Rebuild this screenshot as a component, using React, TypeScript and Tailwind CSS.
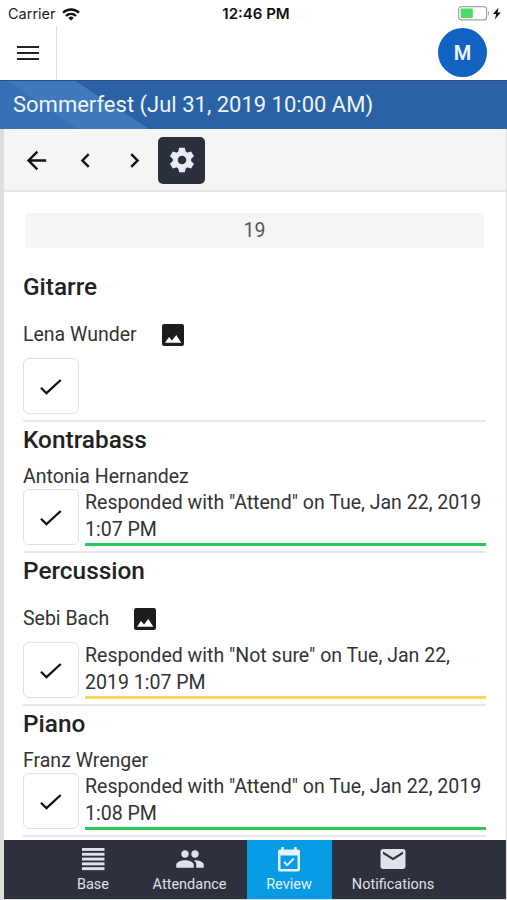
import { clsx } from "clsx";
import { MdArrowBack, MdChevronLeft, MdChevronRight, MdEmail, MdPeople } from "react-icons/md";

type Answer = { text: string; status: "attend" | "unsure" };
type Group = { instrument: string; member: string; photo?: boolean; answer?: Answer };

const GROUPS: Group[] = [
  { instrument: "Gitarre", member: "Lena Wunder", photo: true },
  { instrument: "Kontrabass", member: "Antonia Hernandez", answer: { text: 'Responded with "Attend" on Tue, Jan 22, 2019 1:07 PM', status: "attend" } },
  { instrument: "Percussion", member: "Sebi Bach", photo: true, answer: { text: 'Responded with "Not sure" on Tue, Jan 22, 2019 1:07 PM', status: "unsure" } },
  { instrument: "Piano", member: "Franz Wrenger", answer: { text: 'Responded with "Attend" on Tue, Jan 22, 2019 1:08 PM', status: "attend" } },
];

const TABS = [
  { label: "Base", icon: <BaseIcon />, cls: "w-[76px] pl-[2px]" },
  { label: "Attendance", icon: <MdPeople className="size-[30px]" />, cls: "w-[117px] pl-[2px]" },
  { label: "Review", icon: <CalendarIcon />, cls: "w-[85px] bg-[#079be6] pr-px text-[#e3f5ff]" },
  { label: "Notifications", icon: <MdEmail className="size-[30px]" />, cls: "w-[122px]" },
];

function WifiIcon() {
  return (
    <svg viewBox="0 0 18 13" className="h-[13px] w-[18px]" fill="none" stroke="#111" strokeWidth="2.3">
      <path d="M1 4.8a11.3 11.3 0 0 1 16 0" />
      <path d="M4 8a7 7 0 0 1 10 0" />
      <path d="M9 12.6 6.3 9.900a3.800 3.800 0 0 1 5.400 0Z" fill="#111" stroke="none" />
    </svg>
  );
}

function BatteryIcon() {
  return (
    <svg viewBox="0 0 44 15" className="h-[15px] w-[44px]">
      <rect x="0.6" y="0.6" width="28" height="13.3" rx="3" fill="#fff" stroke="#a3a3a3" strokeWidth="1.2" />
      <rect x="2.6" y="2.6" width="12.2" height="9.3" rx="1" fill="#4cd964" />
      <path d="M30 5v4.600c1.600-.6 1.600-4 0-4.600Z" fill="#a3a3a3" />
      <path d="M40.500 1.500 35 8h3.200l-1.400 5.500L42.800 6.400h-3.300Z" fill="#111" />
    </svg>
  );
}

function PhotoIcon() {
  return (
    <svg viewBox="0 0 22 22" className="size-[22px]">
      <rect width="22" height="22" rx="2.2" fill="#1c1c1c" />
      <path d="m3 18.700 4-5.700 3 3.500 4.300-5.500 5 7.700Z" fill="#fff" />
    </svg>
  );
}

function CheckIcon() {
  return (
    <svg viewBox="0 0 22 16" className="h-4 w-[22px]" fill="none" stroke="#111" strokeWidth="2.3">
      <path d="m1 8.800 5.500 5.400L20.700 1" />
    </svg>
  );
}

function GearIcon() {
  return (
    <svg viewBox="-13 -13 26 26" className="size-[26px]" fill="currentColor">
      {[0, 60, 120].map((deg) => <path key={deg} transform={`rotate(${deg})`} d="M-2.800-12.200h5.600l1 4.200v16l-1 4.200h-5.600l-1-4.200V-8Z" />)}
      <circle r="9.2" />
      <circle r="4.3" fill="#2b303d" />
    </svg>
  );
}

function BaseIcon() {
  return (
    <svg viewBox="0 0 24 24" className="size-6" fill="currentColor">
      {[1, 5.8, 10.6, 15.4, 20.2].map((y) => <rect key={y} x="1" y={y} width="22.5" height="2.9" />)}
    </svg>
  );
}

function CalendarIcon() {
  return (
    <svg viewBox="0 0 22 25" className="h-[25px] w-[22px]">
      <path fill="currentColor" fillRule="evenodd" d="M3.4 0h2.400v2.400h10.400V0h2.400v2.400H20a2 2 0 0 1 2 2V22.500a2 2 0 0 1-2 2H2a2 2 0 0 1-2-2V4.400a2 2 0 0 1 2-2h1.400ZM2.500 8.500v13.500h17V8.500Z" />
      <path d="m6 14.800 3.200 3.300 6.600-6.600" fill="none" stroke="currentColor" strokeWidth="2" />
    </svg>
  );
}

function GroupRow({ group }: { group: Group }) {
  const { instrument, member, photo, answer } = group;
  return (
    <section className="border-b-2 border-[#e8e8e8] pb-[6px]">
      <h2 className="h-9 text-[24.400px] leading-9 font-medium text-[#222]">{instrument}</h2>
      <div className={clsx("flex items-center gap-[25px] pt-[7px] text-[19.500px] text-[#333]", photo ? "h-[53px]" : "h-[31px]")}>
        <span>{member}</span>
        {photo && <PhotoIcon />}
      </div>
      <div className="flex h-14 gap-1.5">
        <button type="button" aria-label="Confirm" className="grid w-14 shrink-0 place-items-center rounded-[6px] border border-[#e0e0e0] bg-white pt-px">
          <CheckIcon />
        </button>
        {answer && (
          <p className={clsx("-mb-px flex-1 border-b-[3px] text-[19.550px] leading-[27px] text-[#333]", answer.status === "attend" ? "border-[#2ac759]" : "border-[#fbd75b]")}>{answer.text}</p>
        )}
      </div>
    </section>
  );
}

export default function App() {
  return (
    <div className="flex h-[900px] w-[507px] flex-col overflow-hidden bg-[#dedede] font-[Roboto,sans-serif]">
      {/* Status bar */}
      <div className="grid h-[26px] shrink-0 grid-cols-3 items-center bg-white pt-[2px] pr-[5px] pl-2 font-[Inter,sans-serif] text-[14.500px] text-[#222]">
        <div className="flex items-center gap-[6px]"><span>Carrier</span><WifiIcon /></div>
        <span className="pl-[2px] text-center text-[15px] font-semibold whitespace-nowrap text-[#111]">12:46 PM</span>
        <div className="flex justify-end pb-[2px]"><BatteryIcon /></div>
      </div>

      <header className="flex h-[54px] shrink-0 items-stretch justify-between bg-white">
        <button type="button" aria-label="Menu" className="flex w-[57px] flex-col justify-center gap-[3.500px] border-r border-[#dcdcdc] pl-[17px]">
          <span className="h-[2.500px] w-[22px] bg-[#222]" />
          <span className="h-[2.500px] w-[22px] bg-[#222]" />
          <span className="h-[2.500px] w-[22px] bg-[#222]" />
        </button>
        <div className="mt-[2px] mr-[20px] grid size-[49px] place-items-center rounded-full bg-[#1262c1] text-[20px] font-semibold text-[#eef5ff]">M</div>
      </header>

      <div className="relative h-[49px] shrink-0 border-t border-[#264f83] bg-[#2b62a5]">
        <svg viewBox="0 0 160 48" className="absolute top-0 left-0 h-12 w-40">
          <path d="M0 0h75l74 48H0Z" fill="#3770b4" />
          <path d="M8 0h67L149 48H77Z" fill="#407abd" />
        </svg>
        <h1 className="relative pl-[13px] text-[22px] leading-[47px] text-[#edf5ff]">Sommerfest (Jul 31, 2019 10:00 AM)</h1>
      </div>

      <div className="flex min-h-0 flex-1 flex-col border-r border-l-4 border-[#dedede]">
        <div className="flex h-[62.500px] shrink-0 items-center border-b-2 border-[#e6e6e6] bg-[#f5f5f5] pt-[2px] text-[#111]">
          <MdArrowBack className="ml-[18px] size-[29px]" />
          <MdChevronLeft className="ml-[20px] size-[29px]" />
          <MdChevronRight className="ml-[20px] size-[29px]" />
          <button type="button" aria-label="Settings" className="ml-[9px] grid size-[47px] place-items-center rounded-[5px] bg-[#2b303d] text-[#e8ebf1]">
            <GearIcon />
          </button>
        </div>

        <main className="min-h-0 flex-1 overflow-hidden bg-white pt-[21px] pr-5 pl-[19px]">
          <div className="mx-[2px] h-[35px] rounded-[3px] bg-[#f5f5f5] text-center text-[19.500px] leading-[35px] text-[#555]">19</div>
          <div className="mt-[21.500px]">
            {GROUPS.map((g) => <GroupRow key={g.instrument} group={g} />)}
          </div>
        </main>

        <nav className="mb-[1.500px] flex h-[59px] shrink-0 bg-[#2d313d] pl-[50px] text-[#dfe2ea]">
          {TABS.map((t) => (
            <div key={t.label} className={clsx("flex flex-col items-center", t.cls)}>
              <div className="grid h-[39px] place-items-center">{t.icon}</div>
              <span className="text-[14.500px] leading-3">{t.label}</span>
            </div>
          ))}
        </nav>
      </div>
    </div>
  );
}
